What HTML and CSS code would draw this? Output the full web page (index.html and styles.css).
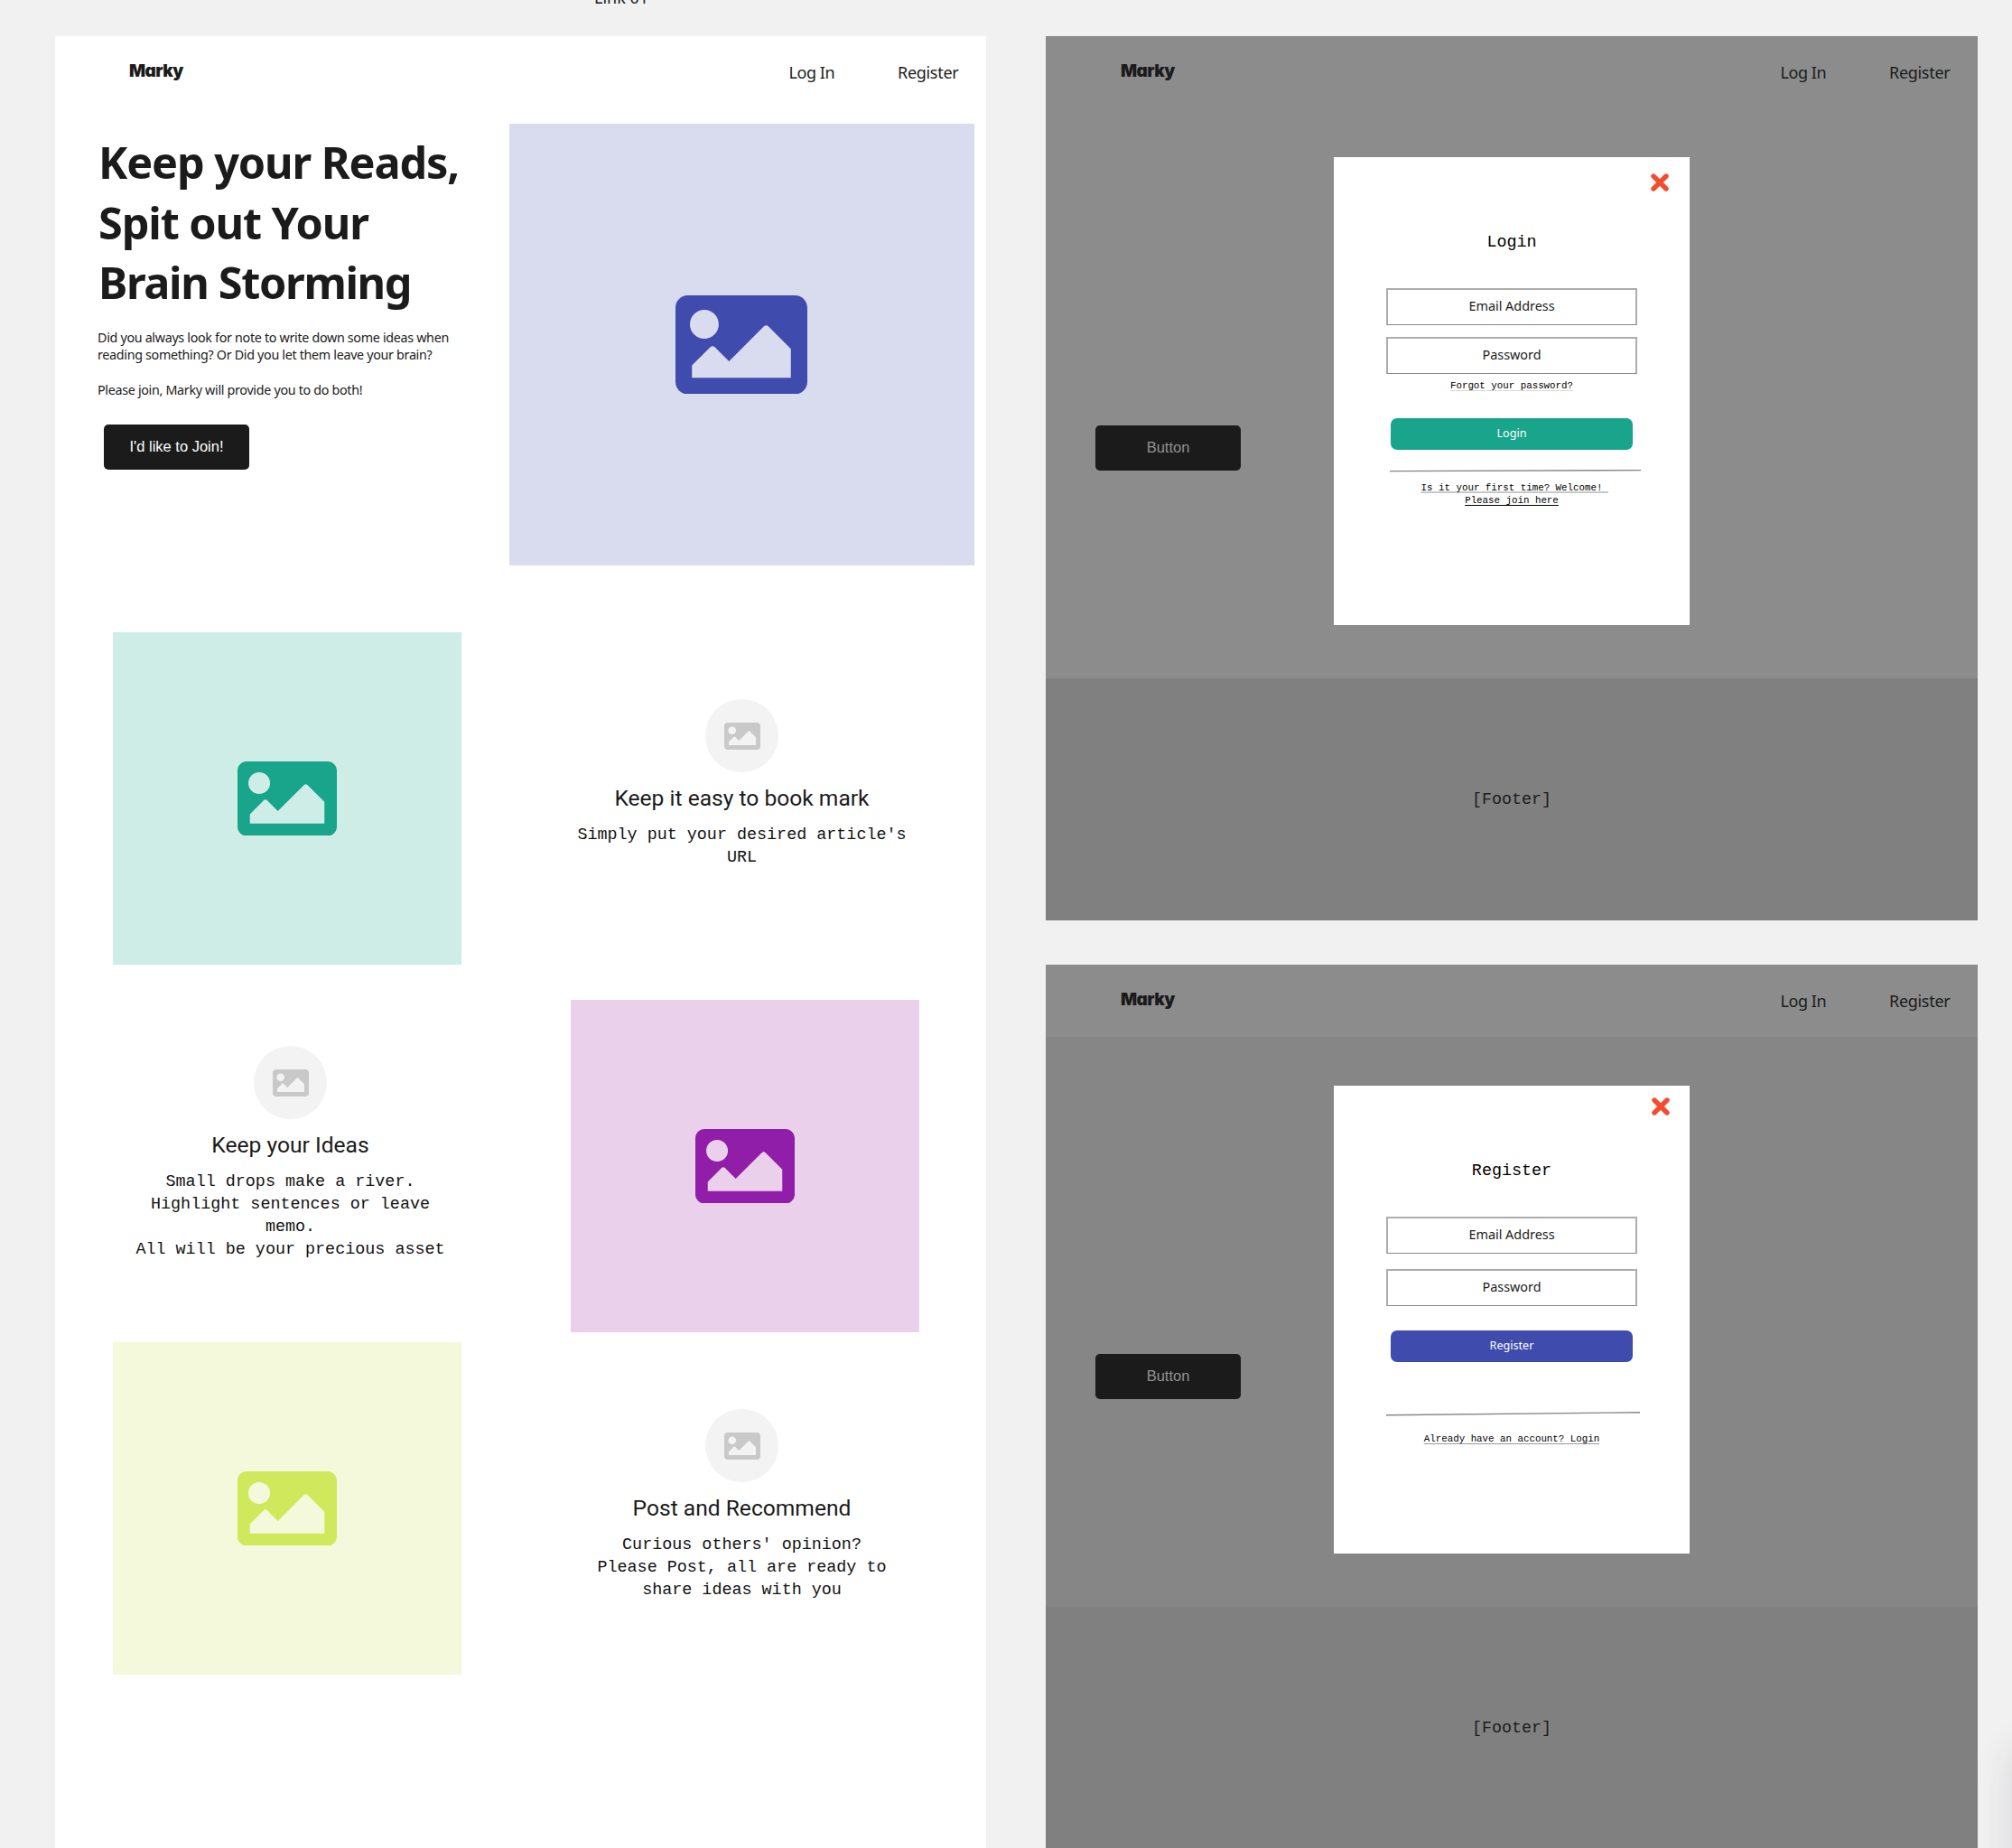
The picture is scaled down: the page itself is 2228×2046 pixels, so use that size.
FILE: index.html
```html
<!DOCTYPE html>
<html lang="en">
<head>
<meta charset="utf-8">
<title>Marky</title>
<link rel="stylesheet" href="styles.css">
</head>
<body>
<svg class="defs" width="0" height="0">
  <symbol id="picture" viewBox="0 64 512 384"><path d="M464 448H48c-26.51 0-48-21.49-48-48V112c0-26.51 21.49-48 48-48h416c26.51 0 48 21.49 48 48v288c0 26.51-21.49 48-48 48zM112 120c-30.928 0-56 25.072-56 56s25.072 56 56 56 56-25.072 56-56-25.072-56-56-56zM64 384h384V272l-87.515-87.515c-4.686-4.686-12.284-4.686-16.971 0L208 320l-55.515-55.515c-4.686-4.686-12.284-4.686-16.971 0L64 336v48z"/></symbol>
  <symbol id="cross" viewBox="0 0 20 20"><path d="M3 3L17 17M17 3L3 17" fill="none" stroke="#f44c2e" stroke-width="5.4" stroke-linecap="round"/></symbol>
</svg>
<div class="top"><span class="link">Link 01</span></div>
<main class="canvas">
  <section class="page">
    <nav class="nav"><span class="logo">Marky</span><a class="login">Log In</a><a class="register">Register</a></nav>
    <div class="hero">
      <div class="pitch">
        <h1>Keep your Reads,<br>Spit out Your<br><span class="tight">Brain Storming</span></h1>
        <p>Did you always look for note to write down some ideas when<br>reading something? Or Did you let them leave your brain?<br><br>Please join, Marky will provide you to do both!</p>
        <button class="cta">I'd like to Join!</button>
      </div>
      <div class="pic blue"><svg><use href="#picture"/></svg></div>
    </div>
    <div class="row first">
      <div class="pic green"><svg><use href="#picture"/></svg></div>
      <div class="feature">
        <div class="dot"><svg><use href="#picture"/></svg></div>
        <h2>Keep it easy to book mark</h2>
        <p>Simply put your desired article's<br>URL</p>
      </div>
    </div>
    <div class="row second">
      <div class="feature">
        <div class="dot"><svg><use href="#picture"/></svg></div>
        <h2>Keep your Ideas</h2>
        <p>Small drops make a river.<br>Highlight sentences or leave<br>memo.<br>All will be your precious asset</p>
      </div>
      <div class="pic purple"><svg><use href="#picture"/></svg></div>
    </div>
    <div class="row third">
      <div class="pic lime"><svg><use href="#picture"/></svg></div>
      <div class="feature">
        <div class="dot"><svg><use href="#picture"/></svg></div>
        <h2>Post and Recommend</h2>
        <p>Curious others' opinion?<br>Please Post, all are ready to<br>share ideas with you</p>
      </div>
    </div>
  </section>
  <div class="screens">
    <section class="screen">
      <nav class="nav"><span class="logo">Marky</span><a class="login">Log In</a><a class="register">Register</a></nav>
      <div class="body"><button class="cta muted">Button</button></div>
      <footer>[Footer]</footer>
      <div class="modal">
        <svg class="close"><use href="#cross"/></svg>
        <h3>Login</h3>
        <div class="field">Email Address</div>
        <div class="field">Password</div>
        <a class="small forgot">Forgot your password?</a>
        <button class="submit teal">Login</button>
        <svg class="rule" viewBox="0 0 278 4"><path d="M0 2.6L278 1.6"/></svg>
        <a class="small"><span class="hang">Is it your first time? Welcome!&nbsp;</span><br><span class="dark">Please join here</span></a>
      </div>
    </section>
    <section class="screen signup">
      <nav class="nav"><span class="logo">Marky</span><a class="login">Log In</a><a class="register">Register</a></nav>
      <div class="body"><button class="cta muted">Button</button></div>
      <footer>[Footer]</footer>
      <div class="modal">
        <svg class="close"><use href="#cross"/></svg>
        <h3>Register</h3>
        <div class="field">Email Address</div>
        <div class="field">Password</div>
        <button class="submit indigo">Register</button>
        <svg class="rule" viewBox="0 0 281 6"><path d="M0 4.7L281 1.7"/></svg>
        <a class="small already">Already have an account? Login</a>
      </div>
    </section>
  </div>
</main>
<div class="edge"></div>
</body>
</html>
```
FILE: styles.css
```css
* { box-sizing: border-box; }
html { overflow: hidden; }
body {
  margin: 0;
  width: 2228px;
  height: 2046px;
  position: relative;
  overflow: hidden;
  background: #f1f1f1;
  color: #1b1b1b;
  font-family: "Noto Sans", sans-serif;
}
.defs { position: absolute; }
h1, h2, h3, p { margin: 0; font-weight: 400; }
button { border: 0; padding: 0; display: block; }

.top { display: flow-root; height: 40px; padding-left: 658px; }
.link { display: block; width: max-content; margin-top: -15px; font-size: 18px; line-height: 24px; }

.canvas { display: flex; padding-left: 61px; gap: 66px; height: 2006px; }
.page { width: 1031px; background: #fff; }

.nav { display: flex; align-items: center; height: 80px; padding-left: 82px; font-size: 18px; line-height: 24px; letter-spacing: -0.3px; }
.logo {
  width: 730.5px;
  margin-top: -3px;
  font-family: Inter, sans-serif;
  font-size: 19px;
  font-weight: 900;
  font-feature-settings: "cv11";
  letter-spacing: -0.6px;
}
.login { width: 120.5px; letter-spacing: -0.45px; }

.hero { display: flex; justify-content: space-between; padding: 17px 13px 0 47px; height: 580px; }
.pitch { padding-top: 9px; }
.pitch h1 { padding-left: 1px; font-size: 48.6px; line-height: 66.5px; font-weight: 700; letter-spacing: -1.1px; white-space: nowrap; }
.tight { letter-spacing: -1.35px; }
.pitch p { margin-top: 18.5px; font-size: 14.3px; line-height: 19.3px; letter-spacing: -0.31px; white-space: nowrap; }
.cta {
  width: 161px;
  height: 50px;
  margin: 29px 0 0 7px;
  padding-bottom: 1px;
  border-radius: 5px;
  background: #1b1b1b;
  color: #fff;
  font: 16.5px "Liberation Sans", sans-serif;
}

.pic { display: flex; align-items: center; justify-content: center; width: 386px; height: 368px; fill: currentColor; }
.pic svg { width: 110px; height: 82.5px; }
.blue { width: 515px; height: 489px; background: #d9dcee; color: #3f4cae; }
.blue svg { width: 146px; height: 109.5px; margin-right: 1px; }
.green { background: #ceede6; color: #18a58b; }
.purple { background: #ead0eb; color: #901ea8; }
.lime { background: #f5f9dc; color: #d0e95c; }

.row { display: flex; gap: 120px; padding-left: 64px; }
.second { padding-left: 70px; gap: 121px; margin-top: 39px; }
.third { margin-top: 11px; }
.feature { width: 380px; padding-top: 74px; text-align: center; }
.second .feature { padding-top: 51px; }
.dot { display: flex; align-items: center; justify-content: center; width: 81px; height: 81px; margin: 0 auto; padding-left: 1px; border-radius: 50%; background: #f3f3f3; fill: #c9c9c9; }
.dot svg { width: 40px; height: 30px; }
.feature h2, .feature p { padding-left: 1px; }
.feature h2 { margin-top: 14px; font: 24.6px/30px Roboto, sans-serif; }
.feature p { margin-top: 13px; font: 18.4px/25px "Liberation Mono", monospace; color: #111; }

.screens { display: flex; flex-direction: column; gap: 49px; }
.screen { position: relative; width: 1032px; height: 979px; background: #8c8c8c; }
.screen .nav { padding-left: 83px; }
.body { height: 631px; padding: 351px 0 0 55px; }
.signup { height: 978px; }
.signup .body { background: #868686; }
.muted { margin: 0; color: #929292; }
footer { height: 268px; background: #808080; text-align: center; font: 18.3px/268px "Liberation Mono", monospace; }
.signup footer { height: 267px; }

.modal {
  position: absolute;
  left: 319px;
  top: 134px;
  width: 394px;
  height: 518px;
  background: #fff;
  display: flex;
  flex-direction: column;
  align-items: center;
}
.close { width: 20px; height: 20px; margin: 18px 23px 0 auto; }
.modal h3 { margin-top: 45px; font: 18.4px/24px "Liberation Mono", monospace; color: #000; }
.field {
  width: 278px;
  height: 41px;
  border: 2px solid #adadad;
  border-bottom: 1px solid #868686;
  text-align: center;
  font-size: 14.4px;
  line-height: 36px;
}
h3 + .field { margin-top: 38px; }
.field + .field { margin-top: 13px; }
.small { font: 10.8px/14px "Liberation Mono", monospace; color: #000; text-align: center; white-space: nowrap; text-decoration: underline #d8d8d8 1px; text-underline-offset: 2px; text-decoration-skip-ink: none; }
.forgot { margin-top: 6px; }
.submit { width: 268px; height: 35px; padding-bottom: 1px; border-radius: 7px; color: #fff; font: 12.6px/34px "Noto Sans", sans-serif; }
.teal { margin-top: 29px; background: #18a58b; }
.indigo { margin-top: 27px; background: #3f4cae; }
.rule { width: 278px; height: 4px; margin: 21px 0 0 8px; stroke: #868686; stroke-width: 1.4; }
.rule + .small { margin-top: 10px; text-decoration: none; }
.hang { margin-right: -6.5px; text-decoration: underline #c8c8c8 2px; text-underline-offset: 1px; text-decoration-skip-ink: none; }
.dark { text-decoration: underline #000 1px; text-underline-offset: 2px; text-decoration-skip-ink: none; }

.signup .close { margin: 13px 22px 0 auto; }
.signup h3 { margin-top: 50px; }
.signup .field + .field { margin-top: 17px; }
.signup .rule { width: 281px; height: 6px; margin: 54px 0 0 2px; }
.signup .rule + .already { margin-top: 18px; text-decoration: underline #999 1px; text-underline-offset: 2px; }

.edge { position: absolute; left: 2232px; top: 1936px; width: 100px; height: 300px; border-radius: 16px; box-shadow: 0 0 44px 2px rgba(40, 45, 70, 0.14); }
```
